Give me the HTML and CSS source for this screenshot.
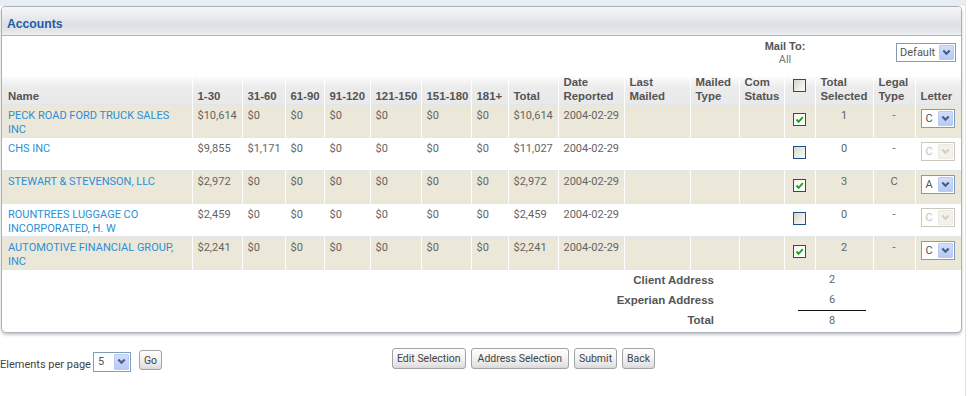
FILE: index.html
```html
<!DOCTYPE html>
<html lang="en">
<head>
<meta charset="utf-8">
<title>Accounts</title>
<link rel="stylesheet" href="styles.css">
</head>
<body>
<div class="page">
  <div class="strip"></div>
  <section class="panel">
    <header class="panel-head"><h1>Accounts</h1></header>
    <div class="mailbar">
      <div class="mailto">
        <div class="mailto-label">Mail To:</div>
        <div class="mailto-value">All</div>
      </div>
      <span class="sel sel-default"><span class="sel-text">Default</span><span class="sel-btn"><svg width="9" height="7" viewBox="0 0 9 7"><polyline points="1.3,1.5 4.5,4.7 7.7,1.5" fill="none" stroke="#4a5f86" stroke-width="2.2"/></svg></span></span>
    </div>
    <table class="grid">
      <colgroup>
        <col style="width:190px"><col style="width:50px"><col style="width:43px"><col style="width:39px"><col style="width:46px"><col style="width:51px"><col style="width:50px"><col style="width:37px"><col style="width:50px"><col style="width:66px"><col style="width:66px"><col style="width:49px"><col style="width:45px"><col style="width:31px"><col style="width:58px"><col style="width:42px"><col style="width:46px">
      </colgroup>
      <thead>
        <tr>
          <th class="first">Name</th>
          <th>1-30</th>
          <th>31-60</th>
          <th>61-90</th>
          <th>91-120</th>
          <th>121-150</th>
          <th>151-180</th>
          <th>181+</th>
          <th>Total</th>
          <th>Date<br>Reported</th>
          <th>Last<br>Mailed</th>
          <th>Mailed<br>Type</th>
          <th>Com<br>Status</th>
          <th class="cbh"><span class="cb"></span></th>
          <th>Total<br>Selected</th>
          <th>Legal<br>Type</th>
          <th>Letter</th>
        </tr>
      </thead>
      <tbody>
        <tr class="tan">
          <td class="first"><a href="#">PECK ROAD FORD TRUCK SALES INC</a></td>
          <td>$10,614</td><td>$0</td><td>$0</td><td>$0</td><td>$0</td><td>$0</td><td>$0</td>
          <td>$10,614</td><td>2004-02-29</td><td></td><td></td><td></td>
          <td class="cbc"><span class="cb on"><svg width="11" height="11" viewBox="0 0 11 11"><polyline points="2.5,5.5 4.6,7.8 8.8,3.2" fill="none" stroke="#22a125" stroke-width="2"/></svg></span></td>
          <td class="c">1</td><td class="c">-</td>
          <td><span class="sel sel-letter"><span class="sel-text">C</span><span class="sel-btn"><svg width="9" height="7" viewBox="0 0 9 7"><polyline points="1.3,1.5 4.5,4.7 7.7,1.5" fill="none" stroke="#4a5f86" stroke-width="2.2"/></svg></span></span></td>
        </tr>
        <tr>
          <td class="first"><a href="#">CHS INC</a></td>
          <td>$9,855</td><td>$1,171</td><td>$0</td><td>$0</td><td>$0</td><td>$0</td><td>$0</td>
          <td>$11,027</td><td>2004-02-29</td><td></td><td></td><td></td>
          <td class="cbc"><span class="cb"></span></td>
          <td class="c">0</td><td class="c">-</td>
          <td><span class="sel sel-letter off"><span class="sel-text">C</span><span class="sel-btn"><svg width="9" height="7" viewBox="0 0 9 7"><polyline points="1.3,1.5 4.5,4.7 7.7,1.5" fill="none" stroke="#d2d0c4" stroke-width="2.2"/></svg></span></span></td>
        </tr>
        <tr class="tan">
          <td class="first"><a href="#">STEWART &amp; STEVENSON, LLC</a></td>
          <td>$2,972</td><td>$0</td><td>$0</td><td>$0</td><td>$0</td><td>$0</td><td>$0</td>
          <td>$2,972</td><td>2004-02-29</td><td></td><td></td><td></td>
          <td class="cbc"><span class="cb on"><svg width="11" height="11" viewBox="0 0 11 11"><polyline points="2.5,5.5 4.6,7.8 8.8,3.2" fill="none" stroke="#22a125" stroke-width="2"/></svg></span></td>
          <td class="c">3</td><td class="c">C</td>
          <td><span class="sel sel-letter"><span class="sel-text">A</span><span class="sel-btn"><svg width="9" height="7" viewBox="0 0 9 7"><polyline points="1.3,1.5 4.5,4.7 7.7,1.5" fill="none" stroke="#4a5f86" stroke-width="2.2"/></svg></span></span></td>
        </tr>
        <tr>
          <td class="first"><a href="#">ROUNTREES LUGGAGE CO INCORPORATED, H. W</a></td>
          <td>$2,459</td><td>$0</td><td>$0</td><td>$0</td><td>$0</td><td>$0</td><td>$0</td>
          <td>$2,459</td><td>2004-02-29</td><td></td><td></td><td></td>
          <td class="cbc"><span class="cb"></span></td>
          <td class="c">0</td><td class="c">-</td>
          <td><span class="sel sel-letter off"><span class="sel-text">C</span><span class="sel-btn"><svg width="9" height="7" viewBox="0 0 9 7"><polyline points="1.3,1.5 4.5,4.7 7.7,1.5" fill="none" stroke="#d2d0c4" stroke-width="2.2"/></svg></span></span></td>
        </tr>
        <tr class="tan">
          <td class="first"><a href="#">AUTOMOTIVE FINANCIAL GROUP, INC</a></td>
          <td>$2,241</td><td>$0</td><td>$0</td><td>$0</td><td>$0</td><td>$0</td><td>$0</td>
          <td>$2,241</td><td>2004-02-29</td><td></td><td></td><td></td>
          <td class="cbc"><span class="cb on"><svg width="11" height="11" viewBox="0 0 11 11"><polyline points="2.5,5.5 4.6,7.8 8.8,3.2" fill="none" stroke="#22a125" stroke-width="2"/></svg></span></td>
          <td class="c">2</td><td class="c">-</td>
          <td><span class="sel sel-letter"><span class="sel-text">C</span><span class="sel-btn"><svg width="9" height="7" viewBox="0 0 9 7"><polyline points="1.3,1.5 4.5,4.7 7.7,1.5" fill="none" stroke="#4a5f86" stroke-width="2.2"/></svg></span></span></td>
        </tr>
      </tbody>
    </table>
    <div class="summary">
      <div class="sum-label">Client Address</div><div></div><div class="sum-val">2</div>
      <div class="sum-label">Experian Address</div><div></div><div class="sum-val">6</div>
      <div class="sum-label">Total</div><div></div><div class="sum-val total">8</div>
    </div>
  </section>
  <div class="controls">
    <div class="pager">
      <span class="pager-label">Elements per page</span>
      <span class="sel sel-page"><span class="sel-text">5</span><span class="sel-btn"><svg width="9" height="7" viewBox="0 0 9 7"><polyline points="1.3,1.5 4.5,4.7 7.7,1.5" fill="none" stroke="#4a5f86" stroke-width="2.2"/></svg></span></span>
      <button class="btn btn-go" type="button">Go</button>
    </div>
    <div class="actions">
      <button class="btn" type="button">Edit Selection</button>
      <button class="btn btn-wide" type="button">Address Selection</button>
      <button class="btn" type="button">Submit</button>
      <button class="btn" type="button">Back</button>
    </div>
  </div>
</div>
</body>
</html>
```
FILE: styles.css
```css
html, body {
  margin: 0;
  padding: 0;
  background: #fff;
}
body {
  font-family: Roboto, "Liberation Sans", Arial, sans-serif;
  font-size: 11px;
  color: #666;
}
.page {
  width: 966px;
  height: 396px;
  box-sizing: border-box;
  border-right: 1px solid #e3e5e8;
}
.strip {
  height: 6px;
  background: #e9eef4;
}
.panel {
  margin-left: 1px;
  width: 961px;
  box-sizing: border-box;
  border: 1px solid #a9b1ba;
  border-radius: 4px 4px 5px 5px;
  box-shadow: 0 2px 3px rgba(0, 0, 0, 0.22);
  background: #fff;
  overflow: hidden;
}
.panel-head {
  height: 28px;
  border-bottom: 1px solid #adb4bc;
  background: linear-gradient(to bottom, #f5f6f8 0, #eceef0 25%, #dde0e4 65%, #e3e6e9 85%, #eef0f2 100%);
  padding-left: 5px;
}
.panel-head h1 {
  margin: 0;
  padding-top: 10px;
  font-family: "Liberation Sans", Arial, sans-serif;
  font-size: 12.2px;
  line-height: 14px;
  font-weight: bold;
  color: #1f5ba8;
}
.mailbar {
  height: 34px;
  display: flex;
  justify-content: flex-end;
  align-items: flex-start;
  padding-right: 5px;
}
.mailto {
  width: 50px;
  margin-top: 4px;
  margin-right: 86px;
  text-align: center;
  line-height: 13px;
}
.mailto-label {
  font-family: "Liberation Sans", Arial, sans-serif;
  font-weight: bold;
  font-size: 11px;
  color: #555;
}
.mailto-value {
  color: #777;
}

/* select look-alike */
.sel {
  display: inline-flex;
  align-items: stretch;
  justify-content: space-between;
  box-sizing: border-box;
  height: 19px;
  border: 1px solid #7f9db9;
  background: #fff;
  padding: 1px;
  color: #555;
  vertical-align: top;
}
.sel-text {
  padding-left: 2px;
  line-height: 15px;
  font-size: 11px;
}
.sel-btn {
  width: 15px;
  box-sizing: border-box;
  border: 1px solid #b9cbf3;
  border-radius: 1px;
  background: linear-gradient(to bottom, #d2defc, #b6c9f6);
  display: flex;
  align-items: center;
  justify-content: center;
}
.sel-default {
  width: 60px;
  margin-top: 7px;
}
.sel-letter {
  width: 34px;
}
.sel-letter .sel-text {
  padding-left: 3px;
}
.sel.off {
  border-color: #cac8bb;
  color: #c4c2b6;
}
.sel.off .sel-btn {
  border-color: #ebeae3;
  background: #f2f1ec;
}

/* data grid */
.grid {
  width: 959px;
  table-layout: fixed;
  border-collapse: collapse;
}
.grid th {
  height: 34px;
  box-sizing: border-box;
  padding: 0 3px 1px 5px;
  vertical-align: bottom;
  text-align: left;
  font-family: "Liberation Sans", Arial, sans-serif;
  font-size: 11.4px;
  font-weight: bold;
  line-height: 14px;
  color: #545454;
  white-space: nowrap;
  border-left: 1px solid #fff;
  background: linear-gradient(to bottom, #fff 0, #fff 5px, #f3f3f3 12px, #ebebeb 18px, #e9e9e9 100%);
}
.grid th.first,
.grid td.first {
  border-left: 0;
  padding-left: 6px;
}
.grid th.cbh {
  vertical-align: top;
  padding: 9px 0 0;
  text-align: center;
}
.grid tbody tr {
  height: 33px;
  border-top: 1px solid #e1e6ec;
}
.grid tbody tr:last-child {
  border-bottom: 1px solid #e1e6ec;
}
.grid td {
  padding: 4px 3px 0 5px;
  vertical-align: top;
  line-height: 14px;
  white-space: nowrap;
  border-left: 1px solid #fff;
  color: #646464;
}
.grid td.first {
  white-space: normal;
  padding-right: 4px;
}
.grid tr.tan td {
  background: #ebe8da;
}
.grid td.c {
  text-align: center;
  padding-left: 3px;
}
.grid td.cbc {
  padding: 8px 0 0;
  text-align: center;
}
.grid a {
  color: #2c8fd6;
  text-decoration: none;
}

/* checkbox look-alike */
.cb {
  display: inline-block;
  width: 13px;
  height: 13px;
  box-sizing: border-box;
  border: 1px solid #1c5180;
  background: linear-gradient(135deg, #d6d6cf 0, #ecece6 55%, #fafaf8 100%);
  vertical-align: top;
}
.cb.on {
  background: linear-gradient(135deg, #f2f2ee 0, #fff 60%);
}
.cb svg {
  display: block;
}

/* summary */
.summary {
  display: grid;
  grid-template-columns: 712px 84px 68px;
  grid-auto-rows: auto;
  line-height: 20px;
  padding-bottom: 1px;
}
.sum-label {
  text-align: right;
  font-family: "Liberation Sans", Arial, sans-serif;
  font-weight: bold;
  font-size: 11.5px;
  color: #555;
}
.sum-val {
  text-align: center;
  color: #666;
}
.sum-val.total {
  border-top: 1px solid #111;
}

/* bottom controls */
.controls {
  display: grid;
  grid-template-columns: 392px auto;
  margin-top: 15px;
}
.pager {
  display: flex;
  align-items: flex-start;
}
.pager-label {
  margin-top: 10px;
  line-height: 14px;
  font-size: 11px;
  color: #444;
}
.sel-page {
  width: 38px;
  height: 20px;
  margin-top: 4px;
  margin-left: 2px;
}
.sel-page .sel-text {
  padding-left: 3px;
  line-height: 16px;
}
.btn {
  height: 21px;
  box-sizing: border-box;
  margin: 0;
  padding: 0 4px;
  border: 1px solid #a3a3a3;
  border-radius: 3px;
  background: linear-gradient(to bottom, #ffffff 0, #f3f3f3 45%, #e4e4e4 85%, #d6d6d6 100%);
  font-family: Roboto, "Liberation Sans", Arial, sans-serif;
  font-size: 10.5px;
  color: #444;
  line-height: 19px;
}
.btn-wide {
  padding: 0 6px;
}
.btn-go {
  margin-top: 2px;
  margin-left: 8px;
  width: 23px;
  height: 20px;
  padding: 0;
}
.actions {
  display: flex;
  gap: 5px;
  align-items: flex-start;
}
```
